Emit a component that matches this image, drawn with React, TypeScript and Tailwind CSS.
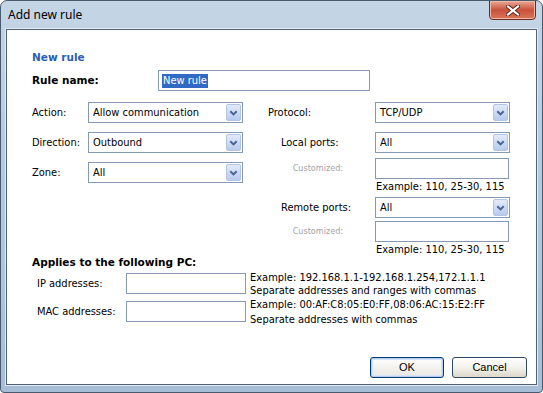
import React from 'react';

const tahoma = { fontFamily: '"DejaVu Sans Condensed", "DejaVu Sans", sans-serif' };
const boldFont = { fontFamily: '"DejaVu Sans", sans-serif' };

const Chevron = () => (
  <svg width="9" height="6" viewBox="0 0 9 6">
    <path d="M1.3 1.2 L4.5 4.4 L7.7 1.2" fill="none" stroke="#4a6593" strokeWidth="2" />
  </svg>
);

const Select = ({ value, width }: { value: string; width: string }) => (
  <div className={`flex h-[21px] ${width} items-center border border-[#8499b3] bg-white`}>
    <span className="flex-1 pl-[4px] text-[11px] leading-[13px] text-black">{value}</span>
    <span className="mr-[1px] flex h-[17px] w-[15px] items-center justify-center rounded-[2px] border border-[#b3c5e3] bg-gradient-to-b from-[#e3ebf8] to-[#b7caee]">
      <Chevron />
    </span>
  </div>
);

const TextBox = ({ width, children }: { width: string; children?: React.ReactNode }) => (
  <div className={`flex h-[21px] ${width} items-center border border-[#8499b3] bg-white pl-[3px]`}>{children}</div>
);

export default function App() {
  return (
    <div className="flex h-[393px] w-[543px] flex-col overflow-hidden rounded-t-[7px] rounded-b-[4px] border border-[#485a6e] bg-gradient-to-b from-[#c4d5e6] via-[#b4c8dc] to-[#a8bed6]" style={tahoma}>
      <div className="relative flex h-[28px] shrink-0 items-center pl-[7px]">
        <span className="text-[12px] text-black" style={{ fontFamily: '"Noto Sans", sans-serif' }}>Add new rule</span>
        <div className="absolute right-[6px] top-[-1px] flex h-[20px] w-[47px] items-center justify-center rounded-b-[4px] border border-[#6b2a20] bg-gradient-to-b from-[#e9a896] via-[#c9503c] to-[#d9765a] shadow-[inset_0_0_0_1px_#f2b9a6]">
          <svg width="14" height="11" viewBox="0 0 14 11">
            <path d="M2 1.5 L12 9.5 M12 1.5 L2 9.5" stroke="#5a2018" strokeWidth="4" strokeLinecap="square" />
            <path d="M2 1.5 L12 9.5 M12 1.5 L2 9.5" stroke="#ffffff" strokeWidth="2.2" strokeLinecap="square" />
          </svg>
        </div>
      </div>

      <div className="mx-[5px] mb-[7px] flex flex-1 flex-col border border-[#4f6175] bg-white pl-[25px] text-[11px] leading-[13px] text-black shadow-[0_0_0_1px_#e2eaf2]">
        <div className="pt-[21px] text-[10.5px] font-bold text-[#2b5eb5]" style={boldFont}>New rule</div>

        <div className="mt-[6px] flex h-[21px] items-center">
          <span className="w-[126px] text-[10.5px] font-bold" style={boldFont}>Rule name:</span>
          <TextBox width="w-[212px]">
            <span className="bg-[#316ac5] px-[1px] leading-[14px] text-white">New rule</span>
          </TextBox>
        </div>

        <div className="mt-[11px] flex">
          <div className="flex w-[236px] flex-col gap-[9px]">
            <div className="flex h-[21px] items-center">
              <span className="w-[56px]">Action:</span>
              <Select value="Allow communication" width="w-[155px]" />
            </div>
            <div className="flex h-[21px] items-center">
              <span className="w-[56px]">Direction:</span>
              <Select value="Outbound" width="w-[155px]" />
            </div>
            <div className="flex h-[21px] items-center">
              <span className="w-[56px]">Zone:</span>
              <Select value="All" width="w-[155px]" />
            </div>
          </div>

          <div className="flex flex-col">
            <div className="flex h-[21px] items-center">
              <span className="w-[107px]">Protocol:</span>
              <Select value="TCP/UDP" width="w-[135px]" />
            </div>
            <div className="mt-[9px] flex h-[21px] items-center">
              <span className="w-[107px] pl-[13px]">Local ports:</span>
              <Select value="All" width="w-[135px]" />
            </div>
            <div className="mt-[5px] flex h-[21px] items-center">
              <span className="w-[107px] pr-[32px] text-right text-[9px] text-[#a3a3a3]">Customized:</span>
              <TextBox width="w-[134px]" />
            </div>
            <div className="mt-[1px] pl-[108px]">Example: 110, 25-30, 115</div>
            <div className="mt-[4px] flex h-[21px] items-center">
              <span className="w-[107px] pl-[13px]">Remote ports:</span>
              <Select value="All" width="w-[135px]" />
            </div>
            <div className="mt-[3px] flex h-[21px] items-center">
              <span className="w-[107px] pr-[32px] text-right text-[9px] text-[#a3a3a3]">Customized:</span>
              <TextBox width="w-[134px]" />
            </div>
            <div className="mt-[2px] pl-[108px] leading-[12px]">Example: 110, 25-30, 115</div>
          </div>
        </div>

        <div className="text-[10.5px] font-bold" style={boldFont}>Applies to the following PC:</div>

        <div className="mt-[4px] flex h-[21px] items-center">
          <span className="w-[94px] pl-[5px]">IP addresses:</span>
          <TextBox width="w-[120px]" />
          <div className="pl-[4px] leading-[13px]">
            <div>Example: 192.168.1.1-192.168.1.254,172.1.1.1</div>
            <div>Separate addresses and ranges with commas</div>
          </div>
        </div>

        <div className="mt-[7px] flex h-[21px] items-center">
          <span className="w-[94px] pl-[5px]">MAC addresses:</span>
          <TextBox width="w-[120px]" />
          <div className="pl-[4px] leading-[15px]">
            <div>Example: 00:AF:C8:05:E0:FF,08:06:AC:15:E2:FF</div>
            <div>Separate addresses with commas</div>
          </div>
        </div>

        <div className="mt-auto flex justify-end gap-[8px] pb-[6px] pr-[9px]" style={{ fontFamily: '"Liberation Sans", Arial, sans-serif' }}>
          <button className="h-[21px] w-[74px] rounded-[3px] border border-[#003c74] bg-gradient-to-b from-white to-[#e8e6df] text-[11px] text-black shadow-[inset_0_0_0_1px_#b4cdf0,inset_0_0_0_2px_#d6e4f7]">
            OK
          </button>
          <button className="h-[21px] w-[75px] rounded-[3px] border border-[#2f4a66] bg-gradient-to-b from-white via-[#f4f2ec] to-[#dcd7ca] text-[11px] text-black">
            Cancel
          </button>
        </div>
      </div>
    </div>
  );
}
